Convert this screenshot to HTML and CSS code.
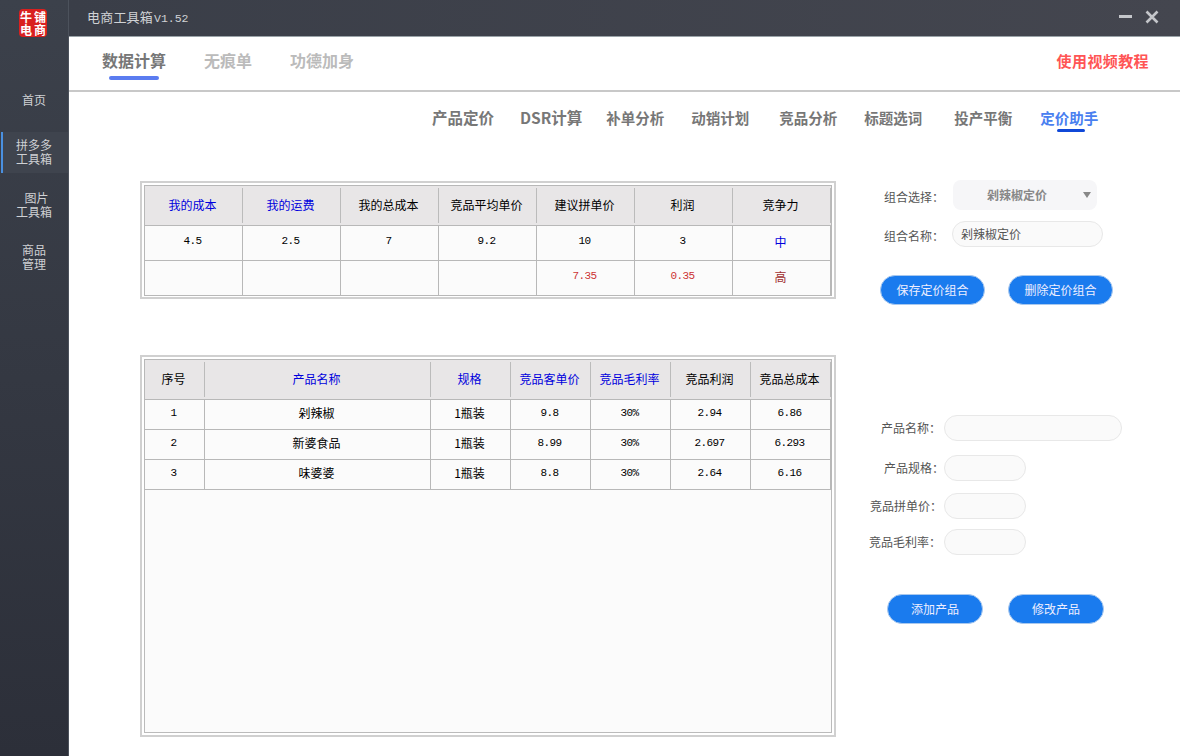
FILE: index.html
```html
<!DOCTYPE html>
<html lang="zh-CN">
<head>
<meta charset="utf-8">
<title>电商工具箱</title>
<link rel="stylesheet" href="styles.css">
</head>
<body>
<div class="app">
  <aside class="sidebar">
    <div class="logo"><span>牛铺</span><span>电商</span></div>
    <nav class="nav">
      <div class="nav-item up">首页</div>
      <div class="nav-item up active">拼多多<br>工具箱</div>
      <div class="nav-item"><span class="indent">图片</span>工具箱</div>
      <div class="nav-item">商品<br>管理</div>
    </nav>
  </aside>
  <main class="main">
    <header class="titlebar">
      <div class="app-title">电商工具箱<span class="ver">V1.52</span></div>
      <div class="win-ctrl">
        <svg width="14" height="14" viewBox="0 0 14 14"><rect x="0" y="5" width="13" height="3" fill="#c4c6ca"/></svg>
        <svg width="14" height="14" viewBox="0 0 14 14"><path d="M1.5 1.5L12.5 12.5M12.5 1.5L1.5 12.5" stroke="#c4c6ca" stroke-width="2.6" fill="none"/></svg>
      </div>
    </header>
    <div class="tabs">
      <div class="tab current">数据计算</div>
      <div class="tab">无痕单</div>
      <div class="tab">功德加身</div>
      <div class="tutorial">使用视频教程</div>
    </div>
    <div class="subtabs">
      <div class="subtab first">产品定价</div>
      <div class="subtab dsr">DSR计算</div>
      <div class="subtab">补单分析</div>
      <div class="subtab">动销计划</div>
      <div class="subtab">竞品分析</div>
      <div class="subtab">标题选词</div>
      <div class="subtab">投产平衡</div>
      <div class="subtab on">定价助手</div>
    </div>
    <div class="work">
      <div class="tables">
        <div class="box box-top">
          <table class="grid">
            <colgroup><col class="c98"><col class="c98"><col class="c98"><col class="c98"><col class="c98"><col class="c98"><col class="c98"></colgroup>
            <thead><tr>
              <th><div class="th-in blue">我的成本</div></th>
              <th><div class="th-in blue">我的运费</div></th>
              <th><div class="th-in">我的总成本</div></th>
              <th><div class="th-in">竞品平均单价</div></th>
              <th><div class="th-in">建议拼单价</div></th>
              <th><div class="th-in">利润</div></th>
              <th><div class="th-in">竞争力</div></th>
            </tr></thead>
            <tbody class="tall">
              <tr><td class="num">4.5</td><td class="num">2.5</td><td class="num">7</td><td class="num">9.2</td><td class="num">10</td><td class="num">3</td><td class="blue">中</td></tr>
              <tr><td></td><td></td><td></td><td></td><td class="num red">7.35</td><td class="num red">0.35</td><td class="darkred">高</td></tr>
            </tbody>
          </table>
        </div>
        <div class="box box-bottom">
          <div class="fill">
            <table class="grid inner">
              <colgroup><col class="c60"><col class="c226"><col class="c80"><col class="c80"><col class="c80"><col class="c80"><col class="c80"></colgroup>
              <thead><tr>
                <th><div class="th-in">序号</div></th>
                <th><div class="th-in blue">产品名称</div></th>
                <th><div class="th-in blue">规格</div></th>
                <th><div class="th-in blue">竞品客单价</div></th>
                <th><div class="th-in blue">竞品毛利率</div></th>
                <th><div class="th-in">竞品利润</div></th>
                <th><div class="th-in">竞品总成本</div></th>
              </tr></thead>
              <tbody class="short">
                <tr><td class="num">1</td><td>剁辣椒</td><td>1瓶装</td><td class="num">9.8</td><td class="num">30%</td><td class="num">2.94</td><td class="num">6.86</td></tr>
                <tr><td class="num">2</td><td>新婆食品</td><td>1瓶装</td><td class="num">8.99</td><td class="num">30%</td><td class="num">2.697</td><td class="num">6.293</td></tr>
                <tr><td class="num">3</td><td>味婆婆</td><td>1瓶装</td><td class="num">8.8</td><td class="num">30%</td><td class="num">2.64</td><td class="num">6.16</td></tr>
              </tbody>
            </table>
          </div>
        </div>
      </div>
      <div class="side-form">
        <div class="group">
          <div class="row">
            <span class="lab l1">组合选择：</span>
            <div class="select"><span class="sel-text">剁辣椒定价</span><span class="caret"></span></div>
          </div>
          <div class="row row2">
            <span class="lab l1">组合名称：</span>
            <div class="input w151">剁辣椒定价</div>
          </div>
          <div class="btns b1">
            <button class="btn w105">保存定价组合</button>
            <button class="btn w105">删除定价组合</button>
          </div>
        </div>
        <div class="group lower">
          <div class="row r-a"><span class="lab l2 p1">产品名称：</span><div class="input w178"></div></div>
          <div class="row r-b"><span class="lab l2 p0">产品规格：</span><div class="input w82"></div></div>
          <div class="row r-c"><span class="lab l2">竞品拼单价：</span><div class="input w82"></div></div>
          <div class="row r-d"><span class="lab l2 p2">竞品毛利率：</span><div class="input w82"></div></div>
          <div class="btns b2">
            <button class="btn w96">添加产品</button>
            <button class="btn w96">修改产品</button>
          </div>
        </div>
      </div>
    </div>
  </main>
</div>
</body>
</html>
```
FILE: styles.css
```css
* { box-sizing: border-box; }
html, body { margin: 0; padding: 0; height: 100%; overflow: hidden; background: #fff; }
body { font-family: "Noto Sans CJK SC", "Liberation Sans", sans-serif; font-size: 12px; color: #000; }
.app { display: flex; width: 1180px; height: 756px; }

.sidebar { width: 69px; flex: none; background: linear-gradient(#3c414b, #2c2f39); border-right: 1px solid #4c525c; }
.logo { width: 28px; height: 28px; margin: 9px 0 0 19px; background: #d9201f; border-radius: 4px; color: #fff; font-weight: 700; font-size: 12px; letter-spacing: 2px; display: grid; grid-template-rows: 13px 13px; align-content: center; justify-items: center; white-space: nowrap; }
.logo span { display: block; line-height: 13px; padding-left: 1px; }
.nav { margin-top: 43px; display: flex; flex-direction: column; gap: 11px; }
.nav-item { height: 41px; display: flex; flex-direction: column; align-items: center; justify-content: center; text-align: center; color: #cfd1d4; font-size: 12px; line-height: 14px; }
.nav-item.up { padding-bottom: 2px; }
.nav-item.active { display: block; padding: 6px 3px 0 0; background: #3f444e; border-left: 2px solid #4a90e0; margin-left: 1px; }
.indent { display: block; padding-left: 5px; }

.main { flex: 1; min-width: 0; display: flex; flex-direction: column; }
.titlebar { height: 37px; flex: none; display: flex; align-items: center; justify-content: space-between; padding: 0 21px 2px 18px; background: linear-gradient(90deg, #3a3e48, #44464f); border-bottom: 1px solid #9aa3a8; }
.app-title { color: #d0d2d5; font-size: 13px; letter-spacing: 0.2px; padding-bottom: 2px; }
.ver { font-family: "Liberation Mono", monospace; font-size: 11.5px; letter-spacing: 0; margin-left: 1px; }
.win-ctrl { display: flex; gap: 12px; }

.tabs { height: 55px; flex: none; display: flex; align-items: center; padding: 0 31px 7px 33px; border-bottom: 2px solid #c8c8c8; }
.tab { position: relative; font-size: 16px; font-weight: 700; color: #bbb; margin-right: 38px; }
.tab.current { color: #777; }
.tab.current::after { content: ""; position: absolute; left: 7px; width: 50px; height: 4px; bottom: -8px; background: #5b7cf0; border-radius: 2px; }
.tutorial { margin-left: auto; font-size: 15px; letter-spacing: 0.4px; font-weight: 700; color: #f55; }

.subtabs { height: 52px; flex: none; display: flex; align-items: center; padding: 0 0 2px 363px; }
.subtab { position: relative; font-size: 14.5px; font-weight: 700; color: #777; white-space: nowrap; }
.subtab.first { font-size: 15.5px; }
.subtab.dsr { margin-left: 26px; font-size: 15.5px; }
.subtab:nth-child(3) { margin-left: 24px; }
.subtab:nth-child(4) { margin-left: 27px; }
.subtab:nth-child(5) { margin-left: 30px; }
.subtab:nth-child(6) { margin-left: 27px; }
.subtab:nth-child(7) { margin-left: 32px; }
.subtab:nth-child(8) { margin-left: 28px; }
.subtab.on { color: #4a80f0; }
.subtab.on::after { content: ""; position: absolute; left: 17px; width: 28px; height: 3px; bottom: -4px; background: #1048d8; border-radius: 2px; }

.work { flex: 1; display: flex; padding: 37px 0 0 71px; }
.tables { width: 696px; flex: none; display: flex; flex-direction: column; }
.box { border: 2px solid #d0d0d0; padding: 2px; }
.box-top { height: 118px; padding-bottom: 1px; }
.box-bottom { height: 382px; margin-top: 56px; }
.fill { height: 100%; background: #fbfbfb; border: 1px solid #bbb; border-top: 0; }
.grid { width: 688px; table-layout: fixed; border-collapse: separate; border-spacing: 0; border: 1px solid #b8b8b8; background: #fbfbfb; font-size: 12px; }
.inner { margin: 0 0 0 -1px; border-bottom: 0; }
.c98 { width: 98px; }
.c60 { width: 60px; }
.c226 { width: 226px; }
.c80 { width: 80px; }
th { height: 39px; padding: 2px 0; background: #e8e6e7; font-weight: 400; border-bottom: 1px solid #b8b8b8; }
.th-in { height: 35px; display: flex; align-items: center; justify-content: center; padding: 0 2px 2px 0; border-right: 1px solid #bbb; }
td { padding: 0 2px 4px 0; text-align: center; border-right: 1px solid #b8b8b8; border-bottom: 1px solid #b8b8b8; }
.tall td { height: 35px; }
.tall tr:last-child td { height: 34px; border-bottom: 0; }
.short td { height: 30px; }
.num { font-family: "Liberation Mono", monospace; font-size: 11px; letter-spacing: -0.6px; }
.blue { color: #0000dd; }
.red { color: #cc3333; }
.darkred { color: #a03030; }

.side-form { flex: 1; display: flex; flex-direction: column; margin-top: -1px; }
.group { position: relative; }
.row { display: flex; align-items: center; color: #555; }
.lab { white-space: nowrap; }
.l1 { width: 68px; margin-left: 48px; margin-top: 2px; }
.select { width: 144px; height: 30px; margin-left: 1px; background: #f6f6f8; border-radius: 8px; display: flex; align-items: center; color: #888; font-weight: 700; position: relative; }
.sel-text { margin-left: 34px; margin-top: -1px; }
.caret { position: absolute; right: 6px; top: 12px; border-left: 4px solid transparent; border-right: 4px solid transparent; border-top: 6px solid #888; }
.row2 { margin-top: 11px; }
.input { height: 26px; line-height: 24px; background: #fafafa; border: 1px solid #e8e8e8; border-radius: 13px; padding-left: 8px; color: #555; }
.w151 { width: 151px; }
.w178 { width: 178px; }
.w82 { width: 82px; }
.btns { display: flex; }
.b1 { margin: 28px 0 0 44px; gap: 23px; }
.b2 { margin: 39px 0 0 51px; gap: 25px; }
.btn { height: 30px; padding: 0 0 2px; border: 1px solid #a8c8ee; border-radius: 15px; background: #1a7bee; color: #eef; font: inherit; font-size: 12px; }
.w105 { width: 105px; }
.w96 { width: 96px; }
.lower { margin-top: 110px; }
.l2 { width: 108px; text-align: right; padding: 0 2px 2px 0; }
.p0 { padding-right: 0; }
.p1 { padding-right: 3px; }
.p2 { padding-right: 3px; }
.r-b { margin-top: 14px; }
.r-c { margin-top: 12px; }
.r-d { margin-top: 10px; }
```
